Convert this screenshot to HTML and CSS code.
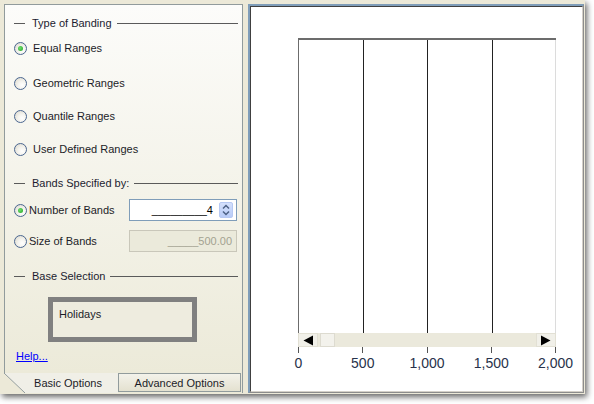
FILE: index.html
```html
<!DOCTYPE html>
<html>
<head>
<meta charset="utf-8">
<link rel="stylesheet" href="styles.css">
</head>
<body>
<div class="window">
  <div class="left">
    <div class="left-body">
      <div class="hdr hdr1"><span class="hl-short"></span><span class="hdr-text">Type of Banding</span><span class="hl-long"></span></div>
      <div class="opt r-equal"><span class="radio checked"></span><span class="opt-text">Equal Ranges</span></div>
      <div class="opt r-geo"><span class="radio"></span><span class="opt-text">Geometric Ranges</span></div>
      <div class="opt r-quant"><span class="radio"></span><span class="opt-text">Quantile Ranges</span></div>
      <div class="opt r-user"><span class="radio"></span><span class="opt-text">User Defined Ranges</span></div>

      <div class="hdr hdr2"><span class="hl-short"></span><span class="hdr-text">Bands Specified by:</span><span class="hl-long"></span></div>
      <div class="field-row row-num">
        <span class="radio checked"></span><span class="field-label">Number of Bands</span>
        <div class="input">
          <span class="input-text">_________4</span>
          <span class="spin">
            <svg width="8" height="12" viewBox="0 0 8 12"><path d="M1 4.5 L4 1.5 L7 4.5" fill="none" stroke="#4d6185" stroke-width="1.5"/><path d="M1 7.5 L4 10.5 L7 7.5" fill="none" stroke="#4d6185" stroke-width="1.5"/></svg>
          </span>
        </div>
      </div>
      <div class="field-row row-size">
        <span class="radio"></span><span class="field-label">Size of Bands</span>
        <div class="input disabled">
          <span class="input-text">_____500.00</span>
        </div>
      </div>

      <div class="hdr hdr3"><span class="hl-short"></span><span class="hdr-text">Base Selection</span><span class="hl-long"></span></div>
      <div class="base-box">Holidays</div>
      <a class="help" href="#">Help...</a>
    </div>
    <div class="tabs">
      <div class="tab tab-basic">Basic Options</div>
      <div class="tab tab-adv">Advanced Options</div>
    </div>
  </div>

  <div class="right">
    <div class="plot">
      <div class="chart">
        <div class="col"></div>
        <div class="col"></div>
        <div class="col"></div>
        <div class="col last"></div>
      </div>
      <div class="scrollbar">
        <div class="sb-btn"><svg width="12" height="11" viewBox="0 0 12 11"><path d="M11 0.5 L1.5 5.5 L11 10.5 Z" fill="#000"/></svg></div>
        <div class="sb-thumb"></div>
        <div class="sb-track"></div>
        <div class="sb-btn"><svg width="12" height="11" viewBox="0 0 12 11"><path d="M1 0.5 L10.5 5.5 L1 10.5 Z" fill="#000"/></svg></div>
      </div>
      <div class="axis">
        <div class="tick"><span class="lbl">0</span></div>
        <div class="tick"><span class="lbl">500</span></div>
        <div class="tick"><span class="lbl">1,000</span></div>
        <div class="tick"><span class="lbl">1,500</span></div>
        <div class="tick"><span class="lbl">2,000</span></div>
      </div>
    </div>
  </div>
</div>
</body>
</html>
```

FILE: styles.css
```css
html, body {
  margin: 0;
  padding: 0;
  background: #ffffff;
}
body {
  width: 594px;
  height: 404px;
  overflow: hidden;
  font-family: "Liberation Sans", Arial, sans-serif;
  font-size: 11px;
  color: #1c1c28;
}
.window {
  width: 585px;
  height: 394px;
  box-sizing: border-box;
  background: #ece9d8;
  padding: 4px 1px 1px 4px;
  display: flex;
  gap: 5px;
  box-shadow: 2px 3px 6px rgba(0,0,0,0.6);
}

/* LEFT PANEL */
.left {
  width: 239px;
  display: flex;
  flex-direction: column;
}
.left-body {
  height: 369px;
  box-sizing: border-box;
  border: 1px solid #919b9c;
  border-bottom: none;
  background: linear-gradient(#fcfcfa, #ecead9);
  display: flex;
  flex-direction: column;
}
.hdr {
  height: 14px;
  line-height: 14px;
  display: flex;
  align-items: center;
  margin-left: 9px;
  margin-right: 4px;
}
.hl-short {
  width: 11px;
  height: 1px;
  background: #5a5a5a;
}
.hdr-text {
  margin: 0 5px 0 7px;
  color: #1c1c30;
  white-space: nowrap;
}
.hl-long {
  flex: 1;
  height: 1px;
  background: #5a5a5a;
}
.hdr1 { margin-top: 11px; }
.hdr2 { margin-top: 19px; }
.hdr3 { margin-top: 17px; }

.opt {
  height: 16px;
  display: flex;
  align-items: center;
  margin-left: 9px;
}
.opt-text { margin-left: 6px; }
.r-equal { margin-top: 10px; }
.r-geo { margin-top: 19px; }
.r-quant { margin-top: 17px; }
.r-user { margin-top: 17px; }

.radio {
  width: 13px;
  height: 13px;
  box-sizing: border-box;
  border-radius: 50%;
  border: 1px solid #4a6690;
  background: radial-gradient(circle at 65% 65%, #ffffff 0%, #f4f3ee 40%, #d8d5c8 100%);
  display: flex;
  align-items: center;
  justify-content: center;
  flex: none;
}
.radio.checked::after {
  content: "";
  width: 5px;
  height: 5px;
  border-radius: 50%;
  background: radial-gradient(circle at 40% 40%, #6fe06f, #21a121);
}

.field-row {
  height: 22px;
  display: flex;
  align-items: center;
  margin-left: 9px;
  margin-right: 5px;
}
.field-label { margin-left: 2px; }
.row-num { margin-top: 9px; }
.row-size { margin-top: 9px; }
.input {
  margin-left: auto;
  width: 108px;
  height: 22px;
  box-sizing: border-box;
  border: 1px solid #7f9db9;
  background: #ffffff;
  display: flex;
  align-items: center;
  justify-content: flex-end;
  padding-right: 3px;
}
.input-text {
  color: #000;
  margin-right: 6px;
}
.spin {
  width: 14px;
  height: 16px;
  box-sizing: border-box;
  border: 1px solid #b7c9f3;
  border-radius: 2px;
  background: linear-gradient(#d4e0fc, #b9ccf7);
  display: flex;
  align-items: center;
  justify-content: center;
}
.input.disabled {
  background: #ebeadb;
  border-color: #c9c7ba;
}
.input.disabled .input-text {
  color: #a3a291;
  margin-right: 1px;
}

.base-box {
  margin-top: 14px;
  margin-left: 43px;
  width: 149px;
  height: 45px;
  box-sizing: border-box;
  border: 5px solid #808080;
  background: #eeecdf;
  padding: 5px 0 0 6px;
  line-height: 14px;
  color: #1c1c28;
}
.help {
  margin-top: 7px;
  margin-left: 11px;
  height: 14px;
  line-height: 14px;
  color: #0000ff;
  text-decoration: underline;
  align-self: flex-start;
}

.tabs {
  height: 20px;
  display: flex;
  border-right: 1px solid #919b9c;
}
.tab {
  height: 20px;
  box-sizing: border-box;
  line-height: 20px;
  text-align: center;
  color: #1c1c28;
}
.tab-basic {
  width: 114px;
  background:
    linear-gradient(to top right, #ece9d8 calc(50% - 0.7px), #919b9c 50%, #f0efe7 calc(50% + 0.7px)) left top / 21px 20px no-repeat,
    #f0efe7;
  padding-left: 14px;
}
.tab-adv {
  width: 123px;
  height: 19px;
  line-height: 18px;
  border: 1px solid #919b9c;
  background: linear-gradient(#f3f2ea, #e4e1d0);
}

/* RIGHT PANEL */
.right {
  width: 336px;
  box-sizing: border-box;
  border-top: 2px solid #7f9db9;
  border-left: 2px solid #7f9db9;
  border-right: 1px solid #8c8c8c;
  border-bottom: 1px solid #8c8c8c;
}
.plot {
  height: 100%;
  box-sizing: border-box;
  border-top: 1px solid #404040;
  border-left: 1px solid #404040;
  border-right: 1px solid #d4d0c8;
  border-bottom: 1px solid #d4d0c8;
  background: #ffffff;
  padding: 31px 0 0 47px;
}
.chart {
  width: 258px;
  height: 295px;
  box-sizing: border-box;
  border-top: 2px solid #6c6c6c;
  display: grid;
  grid-template-columns: 65px 64px 65px 64px;
}
.col {
  border-left: 1px solid #222;
}
.col:first-child { border-left-color: #6c6c6c; }
.col.last {
  border-right: 1px solid #dcdcdc;
}
.scrollbar {
  width: 258px;
  height: 14px;
  display: flex;
  background: #ebe9dc;
}
.sb-btn {
  width: 20px;
  height: 14px;
  box-sizing: border-box;
  background: #f1f0e9;
  border: 1px solid #e2e0d4;
  display: flex;
  align-items: center;
  justify-content: center;
}
.sb-thumb {
  width: 15px;
  margin-left: 2px;
  background: #f3f2ec;
  box-sizing: border-box;
  border: 1px solid #dddbd0;
}
.sb-track { flex: 1; }
.axis {
  width: 258px;
  display: flex;
  justify-content: space-between;
}
.tick {
  width: 1px;
  height: 6px;
  background: #555;
  display: flex;
  justify-content: center;
  overflow: visible;
}
.lbl {
  margin-top: 8px;
  font-size: 14px;
  line-height: 16px;
  color: #28324a;
  white-space: nowrap;
}
```
